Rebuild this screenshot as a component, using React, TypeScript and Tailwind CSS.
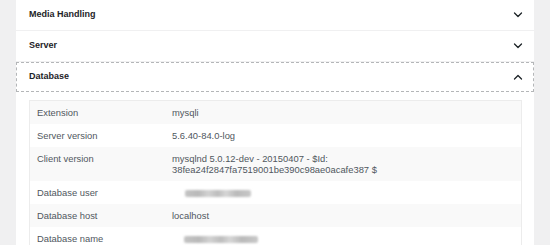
import React from 'react';

type Row = { label: string; value: React.ReactNode };

function Chevron({ up = false }: { up?: boolean }) {
  return (
    <svg
      className="h-[6px] w-[10px] text-[#1d2327]"
      viewBox="0 0 10 6"
      fill="none"
      stroke="currentColor"
      strokeWidth={1.3}
      strokeLinecap="round"
      strokeLinejoin="round"
    >
      {up ? <path d="M1.5 5 L5 1.5 L8.5 5" /> : <path d="M1.5 1 L5 4.5 L8.5 1" />}
    </svg>
  );
}

// blurred-out private values (drawn as a smudge, not readable)
function Smudge({ width }: { width: string }) {
  return (
    <span
      className={`inline-block h-[7px] translate-y-[1px] rounded-[2px] bg-[linear-gradient(90deg,#c4c4c4,#b9b9b9_20%,#d2d2d2_35%,#bdbdbd_50%,#d6d6d6_62%,#bababa_78%,#c8c8c8)] blur-[1.3px] ${width}`}
    />
  );
}

const rows: Row[] = [
  { label: 'Extension', value: 'mysqli' },
  { label: 'Server version', value: '5.6.40-84.0-log' },
  {
    label: 'Client version',
    value: (
      <>
        mysqlnd 5.0.12-dev - 20150407 - $Id:
        <br />
        38fea24f2847fa7519001be390c98ae0acafe387 $
      </>
    ),
  },
  {
    label: 'Database user',
    value: (
      <span className="pl-[13px]">
        <Smudge width="w-[66px]" />
      </span>
    ),
  },
  { label: 'Database host', value: 'localhost' },
  {
    label: 'Database name',
    value: (
      <span className="pl-[12px]">
        <Smudge width="w-[74px]" />
      </span>
    ),
  },
];

function Header({ title, open = false }: { title: string; open?: boolean }) {
  return (
    <div
      className={
        open
          ? 'flex h-[30px] items-center justify-between border border-dashed border-[#b4b6b8] pl-[12px] pr-[10px]'
          : 'flex h-[31px] items-center justify-between border-b border-[#f0f0f1] pl-[13px] pr-[11px]'
      }
    >
      <span className="text-[9px] font-bold text-[#1d2327]">{title}</span>
      <Chevron up={open} />
    </div>
  );
}

export default function App() {
  return (
    <div
      className="h-[245px] w-[550px] overflow-hidden bg-[#f0f0f1] px-4"
      style={{ fontFamily: '"Liberation Sans", Arial, sans-serif' }}
    >
      <div className="h-full bg-white">
        <Header title="Media Handling" />
        <Header title="Server" />
        <Header title="Database" open />

        <div className="pl-[13px] pr-[12px] pt-[8px]">
          <div className="border border-[#ececec]">
            {rows.map((row, i) => (
              <div
                key={row.label}
                className={`flex py-[6px] text-[9.4px] leading-[11px] text-[#50575e] ${
                  i % 2 === 0 ? 'bg-[#f9f9f9]' : 'bg-white'
                }`}
              >
                <div className="w-[142px] shrink-0 pl-[7px]">{row.label}</div>
                <div>{row.value}</div>
              </div>
            ))}
          </div>
        </div>
      </div>
    </div>
  );
}
